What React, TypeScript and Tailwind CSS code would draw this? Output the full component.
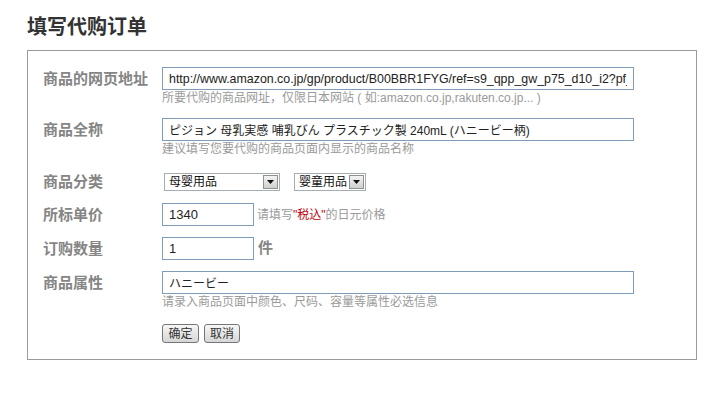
import React from "react";

const font = "font-['Liberation_Sans','Noto_Sans_CJK_SC',sans-serif]";

function Arrow() {
  return (
    <div className="flex h-[14px] w-[15px] items-center justify-center border border-[#8e8f8f] bg-gradient-to-b from-[#f4f4f4] to-[#cfcfcf]">
      <svg width="7" height="4" viewBox="0 0 7 4">
        <path d="M0 0H7L3.5 4Z" fill="#111" />
      </svg>
    </div>
  );
}

function Select({ text, w }: { text: string; w: string }) {
  return (
    <div className={`flex h-[18px] items-center justify-between border border-[#a5acb2] bg-white pl-[4px] pr-[1px] ${w}`}>
      <span className="text-[12px] leading-[16px] text-[#111]">{text}</span>
      <Arrow />
    </div>
  );
}

function Label({ children, h }: { children: React.ReactNode; h: string }) {
  return (
    <div className={`w-[119px] shrink-0 text-[15px] font-bold text-[#858585] ${h}`}>{children}</div>
  );
}

const inputCls =
  "h-[23px] border border-[#7f9db9] bg-white px-[6px] text-[#222] outline-none";

const help = "text-[12px] leading-[16px] text-[#9a9a9a]";

export default function App() {
  return (
    <div className={`h-[399px] w-[708px] bg-white ${font}`}>
      <div className="pl-[27px] pt-[13px]">
        <h2 className="text-[20px] font-bold leading-[28px] text-[#333]">填写代购订单</h2>
      </div>
      <div className="ml-[27px] mt-[9px] w-[670px] border border-[#9a9a9a] pb-[16px] pl-[15px] pt-[16px]">
        {/* row 1 */}
        <div className="flex">
          <Label h="leading-[23px]">商品的网页地址</Label>
          <div className="flex flex-col">
            <input
              readOnly
              className={`${inputCls} w-[472px] text-[12.4px]`}
              defaultValue="http://www.amazon.co.jp/gp/product/B00BBR1FYG/ref=s9_qpp_gw_p75_d10_i2?pf_rd_m=AN1VRQENFRJN5"
            />
            <div className={help}>所要代购的商品网址，仅限日本网站 ( 如:amazon.co.jp,rakuten.co.jp... )</div>
          </div>
        </div>
        {/* row 2 */}
        <div className="mt-[12px] flex">
          <Label h="leading-[23px]">商品全称</Label>
          <div className="flex flex-col">
            <input
              readOnly
              className={`${inputCls} w-[472px] text-[12px]`}
              defaultValue="ピジョン 母乳実感 哺乳びん プラスチック製 240mL (ハニービー柄)"
            />
            <div className={help}>建议填写您要代购的商品页面内显示的商品名称</div>
          </div>
        </div>
        {/* row 3 */}
        <div className="mt-[15px] flex h-[19px] items-center">
          <Label h="leading-[19px]">商品分类</Label>
          <div className="ml-[2px] flex items-center gap-[14px]">
            <Select text="母婴用品" w="w-[116px]" />
            <Select text="婴童用品" w="w-[72px]" />
          </div>
        </div>
        {/* row 4 */}
        <div className="mt-[12px] flex items-center">
          <Label h="leading-[23px]">所标单价</Label>
          <input readOnly className={`${inputCls} w-[92px] text-[13px]`} defaultValue="1340" />
          <span className={`ml-[3px] ${help}`}>
            请填写<span className="text-[#c0000c]">"税込"</span>的日元价格
          </span>
        </div>
        {/* row 5 */}
        <div className="mt-[11px] flex items-center">
          <Label h="leading-[23px]">订购数量</Label>
          <input readOnly className={`${inputCls} w-[92px] text-[13px]`} defaultValue="1" />
          <span className="ml-[4px] text-[15px] font-bold text-[#858585]">件</span>
        </div>
        {/* row 6 */}
        <div className="mt-[11px] flex">
          <Label h="leading-[23px]">商品属性</Label>
          <div className="flex flex-col">
            <input readOnly className={`${inputCls} w-[472px] text-[12px]`} defaultValue="ハニービー" />
            <div className={help}>请录入商品页面中颜色、尺码、容量等属性必选信息</div>
          </div>
        </div>
        {/* buttons */}
        <div className="mt-[14px] flex pl-[119px]">
          <button className="flex h-[19px] w-[37px] items-center justify-center rounded-[3px] border border-[#767676] bg-gradient-to-b from-[#f7f7f7] to-[#d6d6d6] text-[12px] text-[#333]">
            确定
          </button>
          <button className="ml-[5px] flex h-[19px] w-[36px] items-center justify-center rounded-[3px] border border-[#767676] bg-gradient-to-b from-[#f7f7f7] to-[#d6d6d6] text-[12px] text-[#333]">
            取消
          </button>
        </div>
      </div>
    </div>
  );
}
